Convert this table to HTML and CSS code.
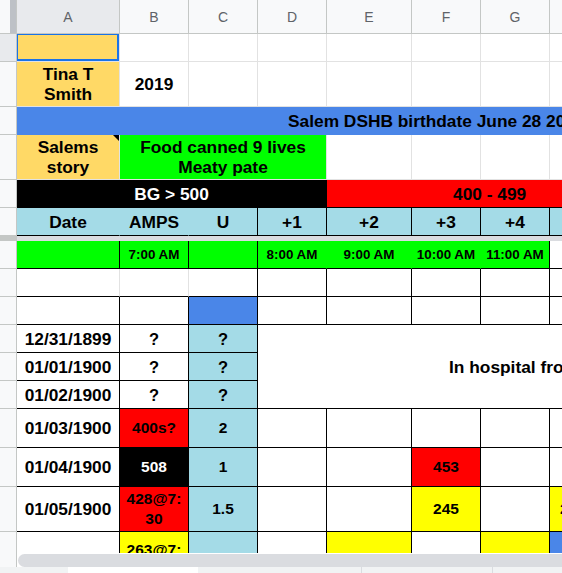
FILE: index.html
```html
<!DOCTYPE html>
<html>
<head>
<meta charset="utf-8">
<link rel="stylesheet" href="styles.css">
</head>
<body>
<div class="app">
  <div class="sheet">
    <div class="grid">
      <!-- column headers -->
      <div class="corner"><span class="corner-bar"></span></div>
      <div class="ch ch-sel">A</div>
      <div class="ch">B</div>
      <div class="ch">C</div>
      <div class="ch">D</div>
      <div class="ch">E</div>
      <div class="ch">F</div>
      <div class="ch">G</div>
      <div class="ch">H</div>

      <!-- row 1 -->
      <div class="rh rh-sel"></div>
      <div class="c or"><span class="selbox"></span></div>
      <div class="c"></div><div class="c"></div><div class="c"></div><div class="c"></div>
      <div class="c"></div><div class="c"></div><div class="c"></div>

      <!-- row 2 -->
      <div class="rh"></div>
      <div class="c or">Tina T<br>Smith</div>
      <div class="c">2019</div>
      <div class="c"></div><div class="c"></div><div class="c"></div>
      <div class="c"></div><div class="c"></div><div class="c"></div>

      <!-- row 3 -->
      <div class="rh"></div>
      <div class="c bl span8 lead-title">Salem DSHB birthdate June 28 2019</div>

      <!-- row 4 -->
      <div class="rh"></div>
      <div class="c or">Salems<br>story<span class="note"></span></div>
      <div class="c gr span3">Food canned 9 lives<br>Meaty pate</div>
      <div class="c"></div><div class="c"></div><div class="c"></div><div class="c"></div>

      <!-- row 5 -->
      <div class="rh"></div>
      <div class="c bk wt span4 bb br">BG &gt; 500</div>
      <div class="c rd span4 bb lead-range">400 - 499</div>

      <!-- row 6 -->
      <div class="rh"></div>
      <div class="c cy bb brn">Date</div>
      <div class="c cy bb brn">AMPS</div>
      <div class="c cy bb br">U</div>
      <div class="c cy bb br">+1</div>
      <div class="c cy bb br">+2</div>
      <div class="c cy bb br">+3</div>
      <div class="c cy bb br">+4</div>
      <div class="c cy bb br"></div>

      <!-- frozen divider -->
      <div class="fz-rh"></div>
      <div class="fz span8"></div>

      <!-- row 7 -->
      <div class="rh"></div>
      <div class="c gr bb br"></div>
      <div class="c gr bb br xs">7:00 AM</div>
      <div class="c gr bb br"></div>
      <div class="c gr bb brn xs">8:00 AM</div>
      <div class="c gr bb brn xs">9:00 AM</div>
      <div class="c gr bb brn xs">10:00 AM</div>
      <div class="c gr bb br xs">11:00 AM</div>
      <div class="c bb br"></div>

      <!-- row 8 -->
      <div class="rh"></div>
      <div class="c bb"></div>
      <div class="c bb"></div>
      <div class="c bb br"></div>
      <div class="c bb br"></div>
      <div class="c bb br"></div>
      <div class="c bb br"></div>
      <div class="c bb br"></div>
      <div class="c bb br"></div>

      <!-- row 9 -->
      <div class="rh"></div>
      <div class="c bb br"></div>
      <div class="c bb br"></div>
      <div class="c bl bb br"></div>
      <div class="c bb br"></div>
      <div class="c bb br"></div>
      <div class="c bb br"></div>
      <div class="c bb br"></div>
      <div class="c bb br"></div>

      <!-- rows 10-12 -->
      <div class="rh"></div>
      <div class="c bb br">12/31/1899</div>
      <div class="c bb br q">?</div>
      <div class="c cy bb br q">?</div>
      <div class="c span5 rows3 bb lead-hosp">In hospital from 12/31 to 01/02</div>

      <div class="rh"></div>
      <div class="c bb br">01/01/1900</div>
      <div class="c bb br q">?</div>
      <div class="c cy bb br q">?</div>

      <div class="rh"></div>
      <div class="c bb br">01/02/1900</div>
      <div class="c bb br q">?</div>
      <div class="c cy bb br q">?</div>

      <!-- row 13 -->
      <div class="rh"></div>
      <div class="c bb br">01/03/1900</div>
      <div class="c rd bb br sm">400s?</div>
      <div class="c cy bb br sm">2</div>
      <div class="c bb br"></div>
      <div class="c bb br"></div>
      <div class="c bb br"></div>
      <div class="c bb br"></div>
      <div class="c bb br"></div>

      <!-- row 14 -->
      <div class="rh"></div>
      <div class="c bb br">01/04/1900</div>
      <div class="c bk wt bb br sm">508</div>
      <div class="c cy bb br sm">1</div>
      <div class="c bb br"></div>
      <div class="c bb br"></div>
      <div class="c rd bb br sm">453</div>
      <div class="c bb br"></div>
      <div class="c bb br"></div>

      <!-- row 15 -->
      <div class="rh"></div>
      <div class="c bb br">01/05/1900</div>
      <div class="c rd bb br sm">428@7:<br>30</div>
      <div class="c cy bb br sm">1.5</div>
      <div class="c bb br"></div>
      <div class="c bb br"></div>
      <div class="c ye bb br sm">245</div>
      <div class="c bb br"></div>
      <div class="c ye bb br sm lead-h">250</div>

      <!-- row 16 -->
      <div class="rh"></div>
      <div class="c bb br"></div>
      <div class="c ye bb br sm">263@7:<br>30</div>
      <div class="c cy bb br sm"></div>
      <div class="c bb br"></div>
      <div class="c ye bb br"></div>
      <div class="c bb br"></div>
      <div class="c ye bb br"></div>
      <div class="c bl bb br"></div>
    </div>
  </div>

  <div class="hscroll">
    <div class="hs-rh"></div>
    <div class="thumb"></div>
  </div>

  <div class="tabs">
    <div class="tab-pad"></div>
    <div class="tab-active"></div>
    <div class="tab tab-w1"></div>
    <div class="tab tab-w2"></div>
  </div>
</div>
</body>
</html>
```

FILE: styles.css
```css
html, body {
  margin: 0;
  padding: 0;
  overflow: hidden;
  background: #fff;
}

body {
  width: 562px;
  height: 573px;
  font-family: "Liberation Sans", Arial, sans-serif;
}

.app {
  display: flex;
  flex-direction: column;
  width: 562px;
  height: 573px;
  overflow: hidden;
}

.sheet {
  flex: none;
  height: 553px;
  overflow: hidden;
}

.grid {
  display: grid;
  grid-template-columns: 17px 103px 69px 69px 69px 85px 69px 69px 69px;
  grid-template-rows: 34px 28px 45px 28px 45px 28px 28px 5px 28px 28px 28px 28px 28px 28px 39px 39px 45px 56px;
  width: max-content;
}

/* headers */
.corner {
  box-sizing: border-box;
  background: #f8f9fa;
  border-right: 1px solid #c4c7c5;
  border-bottom: 1px solid #c4c7c5;
  display: flex;
  justify-content: flex-end;
}

.corner-bar {
  width: 6px;
  background: #bdc1c6;
}

.ch {
  box-sizing: border-box;
  background: #f8f9fa;
  border-right: 1px solid #c4c7c5;
  border-bottom: 1px solid #c4c7c5;
  display: flex;
  align-items: center;
  justify-content: center;
  font-size: 14px;
  color: #5f6368;
}

.ch-sel {
  background: #e8eaed;
}

.rh {
  box-sizing: border-box;
  background: #f8f9fa;
  border-right: 1px solid #c4c7c5;
  border-bottom: 1px solid #c4c7c5;
}

.rh-sel {
  background: #e8eaed;
}

.fz-rh {
  background: #c4c7c5;
}

.fz {
  background: #dadce0;
}

/* cells */
.c {
  box-sizing: border-box;
  position: relative;
  border-right: 1px solid #e2e2e2;
  border-bottom: 1px solid #e2e2e2;
  display: flex;
  align-items: center;
  justify-content: center;
  text-align: center;
  font-weight: 700;
  font-size: 17.33px;
  line-height: 20px;
  color: #000;
  white-space: nowrap;
  overflow: hidden;
}

.sm { font-size: 15.5px; }
.xs { font-size: 13.4px; }
.q  { font-size: 16.5px; }

.bb  { border-bottom-color: #000; }
.br  { border-right-color: #000; }
.brn { border-right-color: transparent; }

.or { background: #ffd966; }
.bl { background: #4a86e8; }
.gr { background: #00ff00; }
.bk { background: #000; }
.rd { background: #ff0000; }
.cy { background: #a4dbe7; }
.ye { background: #ffff00; }
.wt { color: #fff; }

.span3 { grid-column: span 3; }
.span4 { grid-column: span 4; }
.span5 { grid-column: span 5; }
.span8 { grid-column: span 8; }
.rows3 { grid-row: span 3; }

.lead-title {
  justify-content: flex-start;
  padding-left: 271px;
  border-right-color: transparent;
  border-bottom-color: transparent;
}

.lead-range {
  justify-content: flex-start;
  padding-left: 126px;
}

.lead-hosp {
  justify-content: flex-start;
  padding-left: 191px;
}

.lead-h {
  justify-content: flex-start;
  padding-left: 10px;
}

/* selection and note marker (overlays) */
.selbox {
  position: absolute;
  left: -1px;
  top: -1px;
  right: 0;
  bottom: 0;
  border: 2px solid #1a73e8;
}

.note {
  position: absolute;
  top: 0;
  right: -1px;
  width: 0;
  height: 0;
  border-top: 7px solid #000;
  border-left: 7px solid transparent;
}

/* horizontal scrollbar */
.hscroll {
  flex: none;
  height: 14px;
  display: flex;
}

.hs-rh {
  flex: none;
  width: 16px;
  background: #f8f9fa;
  border-right: 1px solid #c4c7c5;
}

.thumb {
  flex: none;
  width: 600px;
  height: 13px;
  margin: 1px 0 0 1px;
  background: #dadce0;
  border-radius: 7px 0 0 7px;
}

/* sheet tab strip */
.tabs {
  flex: none;
  height: 6px;
  display: flex;
  background: #f1f3f4;
}

.tab-pad { width: 68px; flex: none; }
.tab-active { width: 130px; flex: none; background: #fff; }
.tab { flex: none; border-right: 1px solid #dadce0; }
.tab-w1 { width: 163px; }
.tab-w2 { width: 130px; }
```
